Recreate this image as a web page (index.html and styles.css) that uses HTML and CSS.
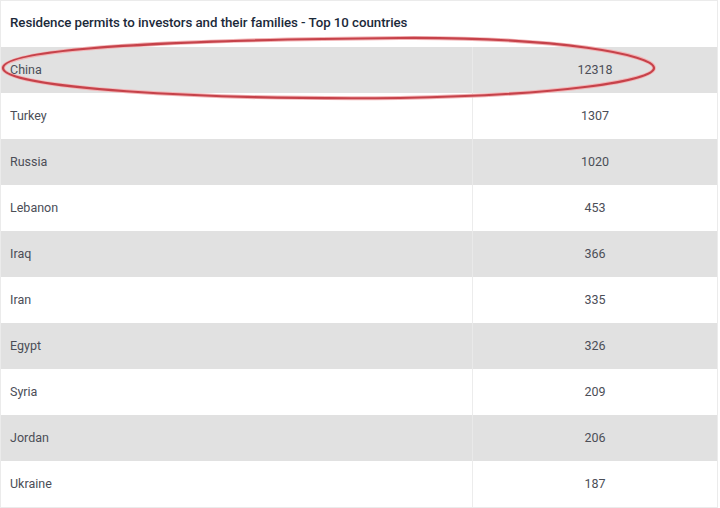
FILE: index.html
```html
<!DOCTYPE html>
<html>
<head>
<meta charset="utf-8">
<link rel="stylesheet" href="styles.css">
</head>
<body>
<div class="wrap">
  <div class="table">
    <div class="title">Residence permits to investors and their families - Top 10 countries</div>
    <div class="row alt"><div class="name">China</div><div class="num">12318</div></div>
    <div class="row"><div class="name">Turkey</div><div class="num">1307</div></div>
    <div class="row alt"><div class="name">Russia</div><div class="num">1020</div></div>
    <div class="row"><div class="name">Lebanon</div><div class="num">453</div></div>
    <div class="row alt"><div class="name">Iraq</div><div class="num">366</div></div>
    <div class="row"><div class="name">Iran</div><div class="num">335</div></div>
    <div class="row alt"><div class="name">Egypt</div><div class="num">326</div></div>
    <div class="row"><div class="name">Syria</div><div class="num">209</div></div>
    <div class="row alt"><div class="name">Jordan</div><div class="num">206</div></div>
    <div class="row"><div class="name">Ukraine</div><div class="num">187</div></div>
  </div>
  <svg class="circle" width="720" height="110" viewBox="0 0 720 110">
    <path d="M 3 68 C 3 50, 150 40, 400 38 C 560 37, 654 55, 654 68 C 654 81, 560 95, 400 98 C 200 100, 3 88, 3 68 Z" fill="none" stroke="#f2b3b5" stroke-width="4"/>
    <path d="M 3 68 C 3 50, 150 40, 400 38 C 560 37, 654 55, 654 68 C 654 81, 560 95, 400 98 C 200 100, 3 88, 3 68 Z" fill="none" stroke="#c6424a" stroke-width="2.2"/>
  </svg>
</div>
</body>
</html>
```
FILE: styles.css
```css
* { box-sizing: border-box; }
html, body { margin: 0; padding: 0; background: #fff; }
.wrap { position: relative; width: 720px; height: 508px; overflow: hidden; }
.table {
  width: 718px;
  border: 1px solid #ebebeb;
  font-family: Roboto, "Liberation Sans", sans-serif;
}
.title {
  height: 46px;
  padding: 14px 0 0 9px;
  font-size: 13.3px;
  font-weight: 500;
  color: #1c2a3a;
  letter-spacing: -0.05px;
}
.row {
  display: grid;
  grid-template-columns: 471px 1fr;
  height: 46px;
  align-items: stretch;
  font-size: 12.5px;
  color: #4b4e57;
}
.row.alt { background: #e1e1e1; }
.name { padding: 15px 0 0 9px; }
.num {
  padding-top: 15px;
  text-align: center;
  border-left: 1px solid #ececec;
}
.row.alt .num { border-left-color: #e9e9e9; }
.circle { position: absolute; left: 0; top: 0; }
```
